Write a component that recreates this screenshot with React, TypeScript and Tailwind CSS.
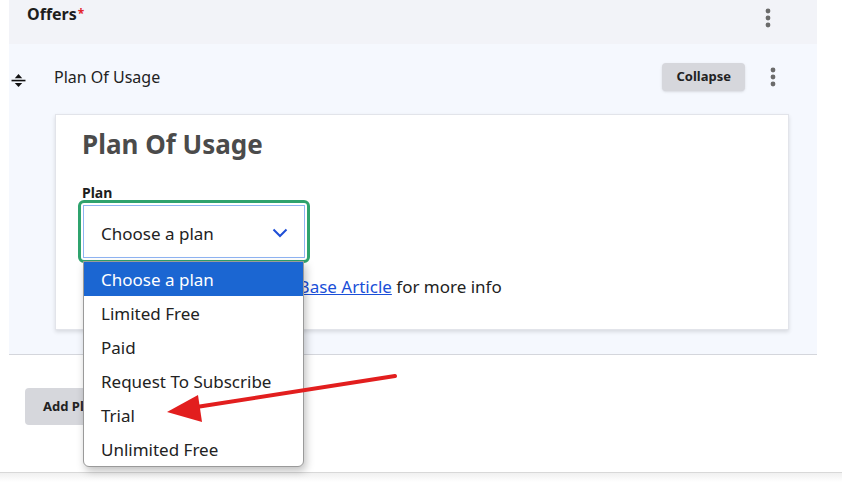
import { useState } from "react";

const plans = ["Choose a plan", "Limited Free", "Paid", "Request To Subscribe", "Trial", "Unlimited Free"];

const Kebab = () => (
  <svg width="6" height="20" viewBox="0 0 6 20" className="fill-[#6b6b6b]">
    <circle cx="3" cy="3" r="2.4" />
    <circle cx="3" cy="10" r="2.4" />
    <circle cx="3" cy="17" r="2.4" />
  </svg>
);

const DragHandle = () => (
  <svg width="15" height="15" viewBox="0 0 14 14" className="fill-[#111]">
    <path d="M7 1 L10.5 4.8 H3.5 Z" />
    <rect x="0.5" y="6.3" width="13" height="1.5" />
    <path d="M7 13 L10.5 9.3 H3.5 Z" />
  </svg>
);

const App = () => {
  const [selected, setSelected] = useState(0);

  return (
    <div className="relative w-[842px] h-[483px] overflow-hidden bg-white font-['Noto_Sans',sans-serif] text-[#222]">
      <div className="ml-[9px] w-[808px] border-b border-[#d4d6dc]">
        {/* header */}
        <div className="h-[44px] bg-[#f2f3f8] flex items-start justify-between pl-[18px] pr-[46px]">
          <h2 className="mt-[2px] text-[16px] font-bold text-[#1d1d1d]">
            Offers<span className="ml-[1px] text-[#e3242b] text-[12px] relative top-[-2px]">*</span>
          </h2>
          <div className="mt-[8px]">
            <Kebab />
          </div>
        </div>

        {/* row */}
        <div className="bg-[#f5f8fe] pb-[24px]">
          <div className="h-[70px] flex items-center pr-[41px]">
            <div className="ml-[2px] mt-[3px]">
              <DragHandle />
            </div>
            <span className="ml-[28px] text-[16px] text-[#222] -mt-[5px]">Plan Of Usage</span>
            <button className="ml-auto h-[28px] px-[14px] rounded bg-[#d6d7dc] shadow-sm text-[13px] font-bold text-[#222] -mt-[4px]">
              Collapse
            </button>
            <div className="ml-[25px] -mt-[4px]">
              <Kebab />
            </div>
          </div>

          {/* card */}
          <div className="ml-[46px] w-[734px] h-[216px] bg-white border border-[#e2e4ea] shadow-[0_2px_4px_rgba(0,0,0,0.12)] pl-[26px] pt-[11px]">
            <h1 className="text-[26px] font-bold text-[#4b4b4b] leading-[36px]">Plan Of Usage</h1>
            <label className="block mt-[22px] text-[14px] font-bold text-[#1d1d1d] leading-[18px]">Plan</label>
            <div className="relative -ml-[4px] mt-[-2px] w-[232px] h-[63px] rounded-[6px] border-[3px] border-[#2fa36e] p-[2px]">
              <div className="h-full border border-[#8fb4f2] bg-white flex items-center justify-between pl-[17px] pr-[16px]">
                <span className="mt-[5px] text-[17px] text-[#222]">{plans[selected]}</span>
                <svg width="16" height="10" viewBox="0 0 16 10" className="mt-[2px] stroke-[#1f4fd6]" fill="none" strokeWidth="2">
                  <path d="M1.5 1.5 L8 8 L14.5 1.5" />
                </svg>
              </div>

              {/* open list */}
              <ul className="absolute left-[2px] top-[58px] w-[221px] bg-white border border-[#9a9a9a] rounded-b-[6px] shadow-[2px_4px_8px_rgba(0,0,0,0.25)] overflow-hidden z-10">
                {plans.map((p, i) => (
                  <li
                    key={p}
                    onClick={() => setSelected(i)}
                    className={
                      i === 0
                        ? "h-[34px] flex items-center pt-[2px] pl-[17px] text-[17px] bg-[#1b66d2] text-white"
                        : "h-[34px] flex items-center pt-[2px] pl-[17px] text-[17px] text-[#222]"
                    }
                  >
                    {p}
                  </li>
                ))}
              </ul>
            </div>
            <p className="mt-[11px] pl-[5px] text-[17px] text-[#222]">
              Please see the Knowledge <a className="text-[#1a4fd8] underline">Base Article</a> for more info
            </p>
          </div>
        </div>
      </div>

      {/* footer */}
      <div className="h-[117px] pl-[25px] pt-[33px]">
        <button className="h-[37px] px-[18px] rounded bg-[#d6d7dc] text-[13px] font-bold text-[#222]">
          Add Plan
        </button>
      </div>
      <div className="h-[10px] border-t border-[#d8d8d8] bg-gradient-to-b from-[#f0f0f0] to-white" />

      {/* annotation arrow */}
      <svg className="absolute left-0 top-0 pointer-events-none z-20" width="842" height="483">
        <line x1="395" y1="376" x2="190" y2="408" stroke="#e21e1e" strokeWidth="4" strokeLinecap="round" />
        <path d="M167 412 L198 395 L202 422 Z" fill="#e21e1e" />
      </svg>
    </div>
  );
};

export default App;
